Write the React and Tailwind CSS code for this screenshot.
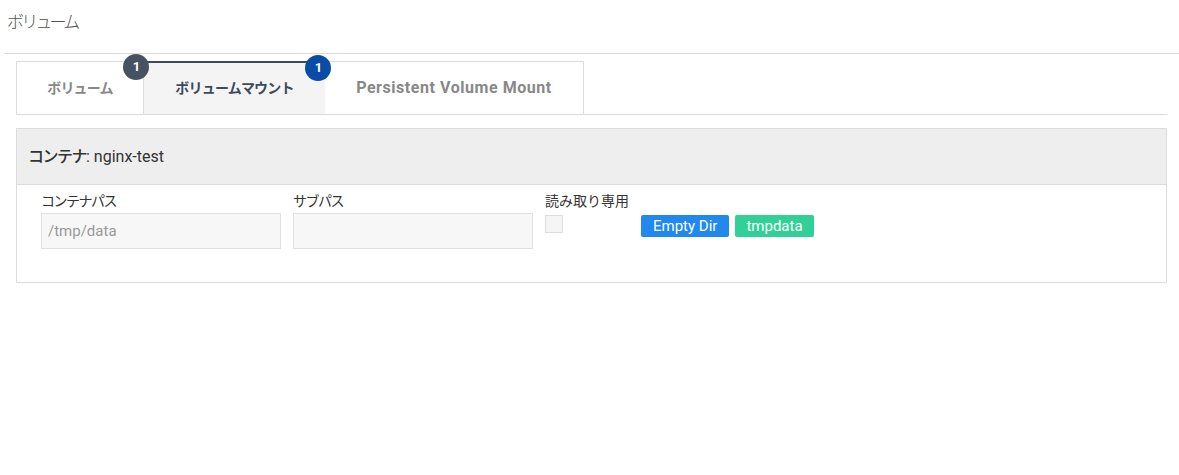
const font = { fontFamily: 'Roboto, "Noto Sans CJK JP", sans-serif' };

const Badge = ({ color }) => (
  <span
    className={`absolute -top-[8px] -right-[6px] z-10 w-[26px] h-[26px] rounded-full flex items-center justify-center text-white text-[13px] font-bold ${color}`}
  >
    1
  </span>
);

export default function App() {
  return (
    <div className="min-h-screen bg-white text-[#333]" style={font}>
      {/* page title */}
      <div className="ml-[4px] pl-[3px] pt-[10px] h-[54px] border-b border-[#d9d9d9]">
        <h1 className="text-[17px] leading-[24px] font-light tracking-[-2.8px] text-[#555]">ボリューム</h1>
      </div>

      <div className="pl-[16px] pr-[12px] pt-[7px]">
        {/* tabs */}
        <div className="border-b border-[#dcdcdc]">
          <div className="flex h-[53px] w-[568px]">
            <div className="relative w-[128px] border border-b-0 border-[#dcdcdc] flex items-center justify-center text-[14px] font-bold text-[#888] tracking-[-0.8px]">
              ボリューム
              <Badge color="bg-[#465162]" />
            </div>
            <div className="relative w-[181px] bg-[#f4f4f4] border-t-2 border-[#3d4a5c] flex items-center justify-center text-[14px] font-bold text-[#3d4a5c] tracking-[-0.8px]">
              ボリュームマウント
              <Badge color="bg-[#0a4ba6]" />
            </div>
            <div className="w-[259px] border border-b-0 border-l-0 border-[#dcdcdc] flex items-center justify-center text-[16px] font-bold text-[#888] tracking-[0.55px]">
              Persistent Volume Mount
            </div>
          </div>
        </div>

        {/* container panel */}
        <div className="mt-[13px] border border-[#dcdcdc]">
          <div className="h-[56px] bg-[#eeeeee] border-b border-[#dcdcdc] flex items-center pl-[11px] text-[16px] text-[#333]">
            <span className="font-medium tracking-[-1.5px]">コンテナ</span>
            <span>: nginx-test</span>
          </div>
          <div className="h-[97px] pl-[24px] pt-[5px] flex gap-[12px] text-[14px]">
            <div className="w-[240px]">
              <div className="h-[22px] leading-[22px] tracking-[-1.5px] text-[#333]">コンテナパス</div>
              <div className="mt-[1px] h-[36px] bg-[#f7f7f7] border border-[#e0e0e0] flex items-center px-[6px] text-[15px] text-[#999]">
                /tmp/data
              </div>
            </div>
            <div className="w-[240px]">
              <div className="h-[22px] leading-[22px] tracking-[-1.5px] text-[#333]">サブパス</div>
              <div className="mt-[1px] h-[36px] bg-[#f7f7f7] border border-[#e0e0e0]" />
            </div>
            <div>
              <div className="h-[22px] leading-[22px] tracking-[0px] text-[#333]">読み取り専用</div>
              <div className="mt-[3px] w-[18px] h-[18px] bg-[#f5f5f5] border border-[#dddddd]" />
            </div>
            <div className="pt-[25px] flex gap-[6px] h-fit">
              <span className="h-[22px] px-[12px] bg-[#2188ee] text-white text-[15px] leading-[22px] rounded-[2px]">Empty Dir</span>
              <span className="h-[22px] px-[11px] bg-[#31d096] text-white text-[15px] leading-[22px] rounded-[2px]">tmpdata</span>
            </div>
          </div>
        </div>
      </div>
    </div>
  );
}
